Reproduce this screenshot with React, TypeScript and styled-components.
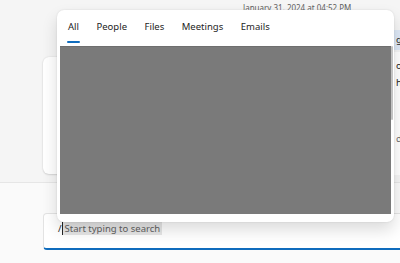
import React from "react";
import styled, { createGlobalStyle } from "styled-components";

const GlobalStyle = createGlobalStyle`
  html, body {
    margin: 0;
    padding: 0;
  }

  body {
    width: 400px;
    height: 263px;
    overflow: hidden;
    background: #f5f5f5;
    font-family: "Noto Sans", "Open Sans", sans-serif;
  }
`

const Page = styled.div`
  position: relative;
  width: 400px;
  height: 263px;
  overflow: hidden;
  background: #f5f5f5;
  display: flex;
  flex-direction: column;
`

const Timestamp = styled.div`
  height: 14px;
  padding: 3px 0 0 243px;
  font-size: 8px;
  line-height: 10px;
  color: #616161;
  white-space: nowrap;
`

const ConversationRow = styled.div`
  display: flex;
  align-items: flex-start;
  gap: 6px;
  height: 144px;
  margin-top: 13px;
  padding-left: 43px;
`

const MessageCard = styled.div`
  flex-shrink: 0;
  width: 345px;
  height: 117px;
  margin-top: 27px;
  background: #fff;
  border-radius: 6px;
  box-shadow: 0 0 2px rgba(0, 0, 0, 0.12), 0 1px 2px rgba(0, 0, 0, 0.1);
`

const SideColumn = styled.div`
  flex-shrink: 0;
  width: 160px;
  display: flex;
  flex-direction: column;
  gap: 2px;
  font-size: 9.5px;
  color: #242424;
`

const SideChip = styled.div`
  height: 20px;
  padding-left: 2px;
  line-height: 20px;
  background: #dde8f6;
  white-space: nowrap;
`

const SideCard = styled.div`
  height: 118px;
  padding: 5px 0 0 2px;
  background: #fff;
  display: flex;
  flex-direction: column;
`

const SideLine = styled.div<{ muted?: boolean; gapTop?: number }>`
  line-height: 17px;
  white-space: nowrap;
  color: ${({ muted }) => (muted ? "#707070" : "#242424")};
  margin-top: ${({ gapTop }) => gapTop || 0}px;
`

const Composer = styled.div`
  flex: 1;
  margin-top: 8px;
  padding: 30px 0 0 43px;
  border-top: 1px solid #e6e6e6;
  background: #fafafa;
`

const SearchBox = styled.div`
  box-sizing: border-box;
  width: 400px;
  height: 37px;
  padding: 8px 0 0 14px;
  display: flex;
  align-items: flex-start;
  background: #fff;
  border: 1px solid #e3e3e3;
  border-bottom: 2px solid #0f6cbd;
  border-radius: 4px 0 0 4px;
  font-size: 9.5px;
  line-height: 13px;
`

const Slash = styled.span`
  color: #242424;
`

const Caret = styled.span`
  width: 1px;
  height: 13px;
  background: #242424;
`

const Placeholder = styled.span`
  padding: 0 2px;
  color: #616161;
  background: #e6e6e6;
  white-space: nowrap;
`

const Popup = styled.div`
  position: absolute;
  left: 57px;
  top: 10px;
  width: 337px;
  height: 212px;
  background: #fff;
  border-radius: 7px;
  box-shadow: 0 8px 16px rgba(0, 0, 0, 0.14), 0 0 2px rgba(0, 0, 0, 0.12);
  display: flex;
  flex-direction: column;
`

const TabList = styled.div`
  display: flex;
  gap: 15.5px;
  height: 33px;
  padding-left: 10px;
`

const Tab = styled.div<{ active?: boolean }>`
  position: relative;
  padding: 10px 1px 0;
  font-size: 9.5px;
  line-height: 14px;
  color: #242424;
  white-space: nowrap;

  &::after {
    content: "";
    display: ${({ active }) => (active ? "block" : "none")};
    position: absolute;
    left: 0;
    right: 0;
    bottom: 0;
    height: 2px;
    border-radius: 1px;
    background: #0f6cbd;
  }
`

const Results = styled.div`
  display: flex;
  margin: 3px 0 0 3px;
`

const Redacted = styled.div`
  width: 331px;
  height: 168px;
  background: #7a7a7a;
  box-shadow: inset 0 1px 0 #6e6e6e;
`

const ScrollTrack = styled.div`
  width: 2px;
  height: 168px;
`

const ScrollThumb = styled.div`
  height: 74px;
  background: #c2c2c2;
  border-radius: 1px;
`

const tabs = ["All", "People", "Files", "Meetings", "Emails"];

const App: React.FC = () => {
    return (
        <>
            <GlobalStyle/>
            <Page>
                <Timestamp>January 31, 2024 at 04:52 PM</Timestamp>
                <ConversationRow>
                    <MessageCard/>
                    <SideColumn>
                        <SideChip>gs</SideChip>
                        <SideCard>
                            <SideLine>or</SideLine>
                            <SideLine>hi</SideLine>
                            <SideLine muted gapTop={39}>d</SideLine>
                        </SideCard>
                    </SideColumn>
                </ConversationRow>
                <Composer>
                    <SearchBox>
                        <Slash>/</Slash>
                        <Caret/>
                        <Placeholder>Start typing to search</Placeholder>
                    </SearchBox>
                </Composer>
                <Popup>
                    <TabList>
                        {tabs.map((t, i) => (
                            <Tab key={t} active={i === 0}>{t}</Tab>
                        ))}
                    </TabList>
                    <Results>
                        <Redacted/>
                        <ScrollTrack>
                            <ScrollThumb/>
                        </ScrollTrack>
                    </Results>
                </Popup>
            </Page>
        </>
    )
}

export default App
